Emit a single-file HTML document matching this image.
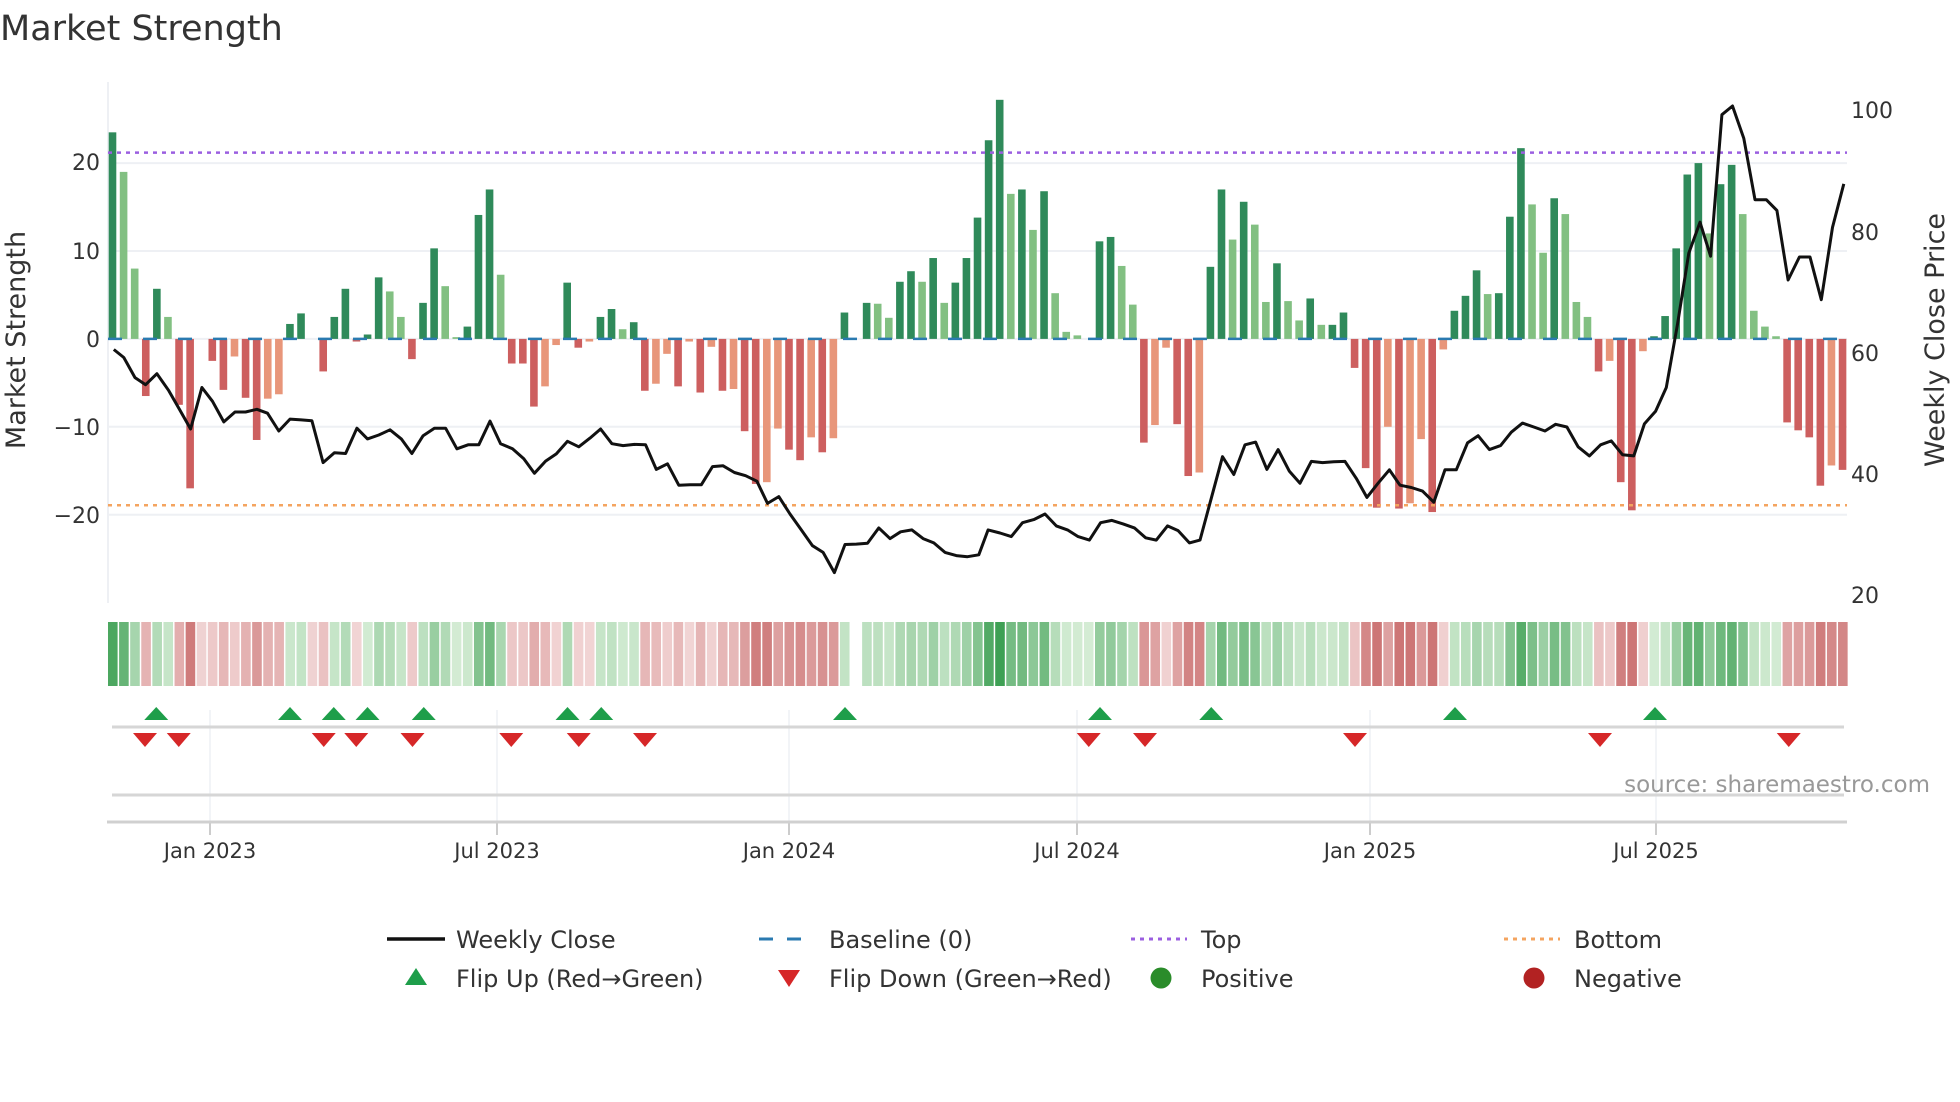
<!DOCTYPE html>
<html><head><meta charset="utf-8"><style>
html,body{margin:0;padding:0;background:#fff;}
svg{display:block;font-family:"DejaVu Sans","Liberation Sans",sans-serif;}
</style></head><body>
<svg id="s" width="1960" height="1102" viewBox="0 0 1960 1102" xmlns="http://www.w3.org/2000/svg">
<rect width="1960" height="1102" fill="#fff"/>
<text x="0" y="40" font-size="35" fill="#333">Market Strength</text>
<g id="grid"></g>
<g id="bars"></g>
<g id="over"></g>
<g id="heat"></g>
<g id="marks"></g>
<g font-size="22" fill="#333">
<text x="100" y="170" text-anchor="end">20</text>
<text x="100" y="259" text-anchor="end">10</text>
<text x="100" y="347" text-anchor="end">0</text>
<text x="100" y="435" text-anchor="end">−10</text>
<text x="100" y="523" text-anchor="end">−20</text>
<text x="1851" y="118">100</text>
<text x="1851" y="240">80</text>
<text x="1851" y="361">60</text>
<text x="1851" y="482">40</text>
<text x="1851" y="603">20</text>
</g>
<text transform="translate(25,340) rotate(-90)" text-anchor="middle" font-size="27" fill="#333">Market Strength</text>
<text transform="translate(1944,340) rotate(-90)" text-anchor="middle" font-size="27" fill="#333">Weekly Close Price</text>
<text x="1930" y="792" text-anchor="end" font-size="23" fill="#999">source: sharemaestro.com</text>
<g font-size="21" fill="#333" text-anchor="middle">
<text x="210" y="858">Jan 2023</text>
<text x="497" y="858">Jul 2023</text>
<text x="789" y="858">Jan 2024</text>
<text x="1077" y="858">Jul 2024</text>
<text x="1370" y="858">Jan 2025</text>
<text x="1656" y="858">Jul 2025</text>
</g>
<g font-size="24" fill="#333">
<line x1="387" y1="939" x2="445" y2="939" stroke="#111" stroke-width="3.5"/>
<text x="456" y="948">Weekly Close</text>
<line x1="759" y1="939" x2="815" y2="939" stroke="#2a7ab0" stroke-width="3" stroke-dasharray="14,14"/>
<text x="829" y="948">Baseline (0)</text>
<line x1="1131" y1="939" x2="1187" y2="939" stroke="#9b5fe0" stroke-width="3" stroke-dasharray="4,5"/>
<text x="1201" y="948">Top</text>
<line x1="1504" y1="939" x2="1560" y2="939" stroke="#f4a460" stroke-width="3" stroke-dasharray="4,5"/>
<text x="1574" y="948">Bottom</text>
<polygon points="416,968 427,985 405,985" fill="#1e9e4a"/>
<text x="456" y="987">Flip Up (Red→Green)</text>
<polygon points="778,970 800,970 789,987" fill="#d62728"/>
<text x="829" y="987">Flip Down (Green→Red)</text>
<circle cx="1161" cy="978" r="10.5" fill="#2a8c2a"/>
<text x="1201" y="987">Positive</text>
<circle cx="1534" cy="978" r="10.5" fill="#b22222"/>
<text x="1574" y="987">Negative</text>
</g>
</svg>
<script>
var NS="http://www.w3.org/2000/svg";
function el(p,t,a){var e=document.createElementNS(NS,t);for(var k in a)e.setAttribute(k,a[k]);p.appendChild(e);return e;}
var B="23.5D 19L 8L -6.5R 5.7D 2.5L -7.5R -17R 0 -2.5R -5.8R -2S -6.7R -11.5R -6.8S -6.3S 1.7D 2.9D 0 -3.7R 2.5D 5.7D -0.3R 0.5D 7D 5.4L 2.5L -2.3R 4.1D 10.3D 6L 0.2L 1.4D 14.1D 17D 7.3L -2.8R -2.8R -7.7R -5.4S -0.7S 6.4D -1R -0.3S 2.5D 3.4D 1.1L 1.9D -5.9R -5.1S -1.7S -5.4R -0.3S -6.1R -0.9S -5.9R -5.7S -10.5R -16.5R -16.3S -10.2S -12.6R -13.8R -11.2S -12.9R -11.3S 3D 0 4.1D 4L 2.4L 6.5D 7.7D 6.5L 9.2D 4.1L 6.4D 9.2D 13.8D 22.6D 27.2D 16.5L 17D 12.4L 16.8D 5.2L 0.8L 0.4L 0 11.1D 11.6D 8.3L 3.9L -11.8R -9.8S -1S -9.7R -15.6R -15.2S 8.2D 17D 11.3L 15.6D 13L 4.2L 8.6D 4.3L 2.1L 4.6D 1.6L 1.6D 3D -3.3R -14.7R -19.2R -10S -19.3R -18.7S -11.4S -19.7R -1.2S 3.2D 4.9D 7.8D 5.1L 5.2D 13.9D 21.7D 15.3L 9.8L 16D 14.2L 4.2L 2.5L -3.7R -2.5S -16.3R -19.5R -1.4S 0.3D 2.6D 10.3D 18.7D 20D 12L 17.6D 19.8D 14.2L 3.2L 1.4L 0.3L -9.5R -10.4R -11.2R -16.7R -14.4S -14.9R".split(" ");
var Z=338.9,U=8.79,X0=112.5,DX=11.09;
var col={D:"#2f8a5a",L:"#82c082",R:"#cd5f5f",S:"#e8967a"};
var g=document.getElementById("grid");
[20,10,0,-10,-20].forEach(function(v){el(g,"line",{x1:108,x2:1847,y1:Z-v*U,y2:Z-v*U,stroke:"#eef0f4","stroke-width":2});});
el(g,"line",{x1:108,x2:108,y1:82,y2:603,stroke:"#eef0f4","stroke-width":2});
[210,497,789,1077,1370,1656].forEach(function(x){el(g,"line",{x1:x,x2:x,y1:710,y2:822,stroke:"#eef0f4","stroke-width":1.5});el(g,"line",{x1:x,x2:x,y1:822,y2:835,stroke:"#bbb","stroke-width":1.5});});
el(g,"line",{x1:112,x2:1844,y1:727,y2:727,stroke:"#d6d6d6","stroke-width":3});
el(g,"line",{x1:112,x2:1844,y1:795,y2:795,stroke:"#d6d6d6","stroke-width":3});
el(g,"line",{x1:107,x2:1847,y1:822,y2:822,stroke:"#d0d0d0","stroke-width":3});
var b=document.getElementById("bars"),h=document.getElementById("heat");
function mix(a,c,t){return "rgb("+[0,1,2].map(function(i){return Math.round(a[i]+(c[i]-a[i])*t);}).join(",")+")";}
B.forEach(function(s,i){var v=parseFloat(s),t=s.slice(-1);var x=X0+i*DX;
 if(v!==0){var y=Z-v*U;el(b,"rect",{x:x-3.8,y:Math.min(y,Z),width:7.6,height:Math.abs(v*U),fill:col[t]});}
 var hx=108+i*11.09,fill;
 if(v>0)fill=mix([212,236,212],[62,160,84],Math.min(1,v/26));
 else if(v<0)fill=mix([242,214,214],[205,118,118],Math.min(1,-v/18));
 else fill=(i==67)?"#fff":(i==88?"#d4ecd4":"#efd2d2");
 el(h,"rect",{x:hx,y:622,width:9.6,height:64,fill:fill});
});
var o=document.getElementById("over");
el(o,"line",{x1:108,x2:1847,y1:Z,y2:Z,stroke:"#2a7ab0","stroke-width":2.5,"stroke-dasharray":"14,21"});
el(o,"line",{x1:108,x2:1847,y1:152.6,y2:152.6,stroke:"#9b5fe0","stroke-width":2.5,"stroke-dasharray":"4,5"});
el(o,"line",{x1:108,x2:1847,y1:505.3,y2:505.3,stroke:"#f4a460","stroke-width":2.5,"stroke-dasharray":"4,5"});
var P1=[182,884,198,904,216,955,233,973,251,945,270,988,287,1035,305,1085,323,980,340,1015,358,1067,376,1042,393,1042,411,1035,428,1045,446,1090,464,1060,482,1062,499,1064,517,1170,535,1145,553,1147,571,1083,588,1110,606,1100,624,1087,642,1110,659,1147,677,1102,695,1083,713,1083,731,1135,749,1125,766,1125,784,1065,801,1122,820,1135,838,1160,855,1197,873,1166,890,1148,908,1116,926,1130,944,1108,961,1085,979,1122,997,1127,1015,1124,1033,1125,1050,1187,1068,1173,1086,1227,1104,1226,1122,1226,1140,1180,1157,1178,1175,1195,1193,1203,1211,1217,1228,1273,1246,1256,1264,1300,1282,1340,1300,1380,1317,1397,1335,1448,1352,1377,1370,1376,1388,1374,1406,1335,1424,1362,1441,1345,1459,1340,1477,1362,1494,1373,1512,1397,1530,1405,1548,1408,1566,1403];
var P2=[13,1340,32,1348,50,1357,68,1322,86,1314,104,1300,122,1330,140,1340,157,1357,175,1366,193,1322,211,1316,229,1325,247,1335,265,1360,282,1366,300,1330,317,1342,335,1373,352,1366,370,1260,388,1155,406,1200,424,1125,441,1118,459,1187,477,1137,495,1192,512,1222,530,1167,548,1170,566,1168,584,1167,602,1210,619,1258,637,1222,655,1188,672,1227,690,1233,708,1242,726,1270,744,1188,762,1188,780,1120,797,1102,815,1137,833,1127,850,1093,868,1070,886,1080,904,1090,921,1073,939,1080,957,1130,975,1153,993,1125,1010,1115,1028,1150,1046,1153,1063,1072,1081,1040,1098,980,1116,820,1134,640,1152,562,1169,648,1187,290,1204,268,1222,350,1240,505,1258,505,1275,532,1293,708,1311,650,1328,650,1346,758,1364,575,1382,465];
var pts=[];
for(var i=0;i<P1.length;i+=2)pts.push((P1[i]/1.6).toFixed(1)+","+(P1[i+1]/2.529).toFixed(1));
for(var i=0;i<P2.length;i+=2)pts.push((980+P2[i]/1.6).toFixed(1)+","+(P2[i+1]/2.529).toFixed(1));
el(o,"polyline",{points:pts.join(" "),fill:"none",stroke:"#111","stroke-width":3,"stroke-linejoin":"round"});
var m=document.getElementById("marks");
[125,232,267,294,339,454,481,676,880,969,1164,1324].forEach(function(d){var x=d*1.25;el(m,"polygon",{points:(x)+",707 "+(x+12)+",720 "+(x-12)+",720",fill:"#1e9e4a"});});
[116,143,259,285,330,409,463,516,871,916,1084,1280,1431].forEach(function(d){var x=d*1.25;el(m,"polygon",{points:(x-12)+",733 "+(x+12)+",733 "+x+",747",fill:"#d62728"});});
</script>
</body></html>
